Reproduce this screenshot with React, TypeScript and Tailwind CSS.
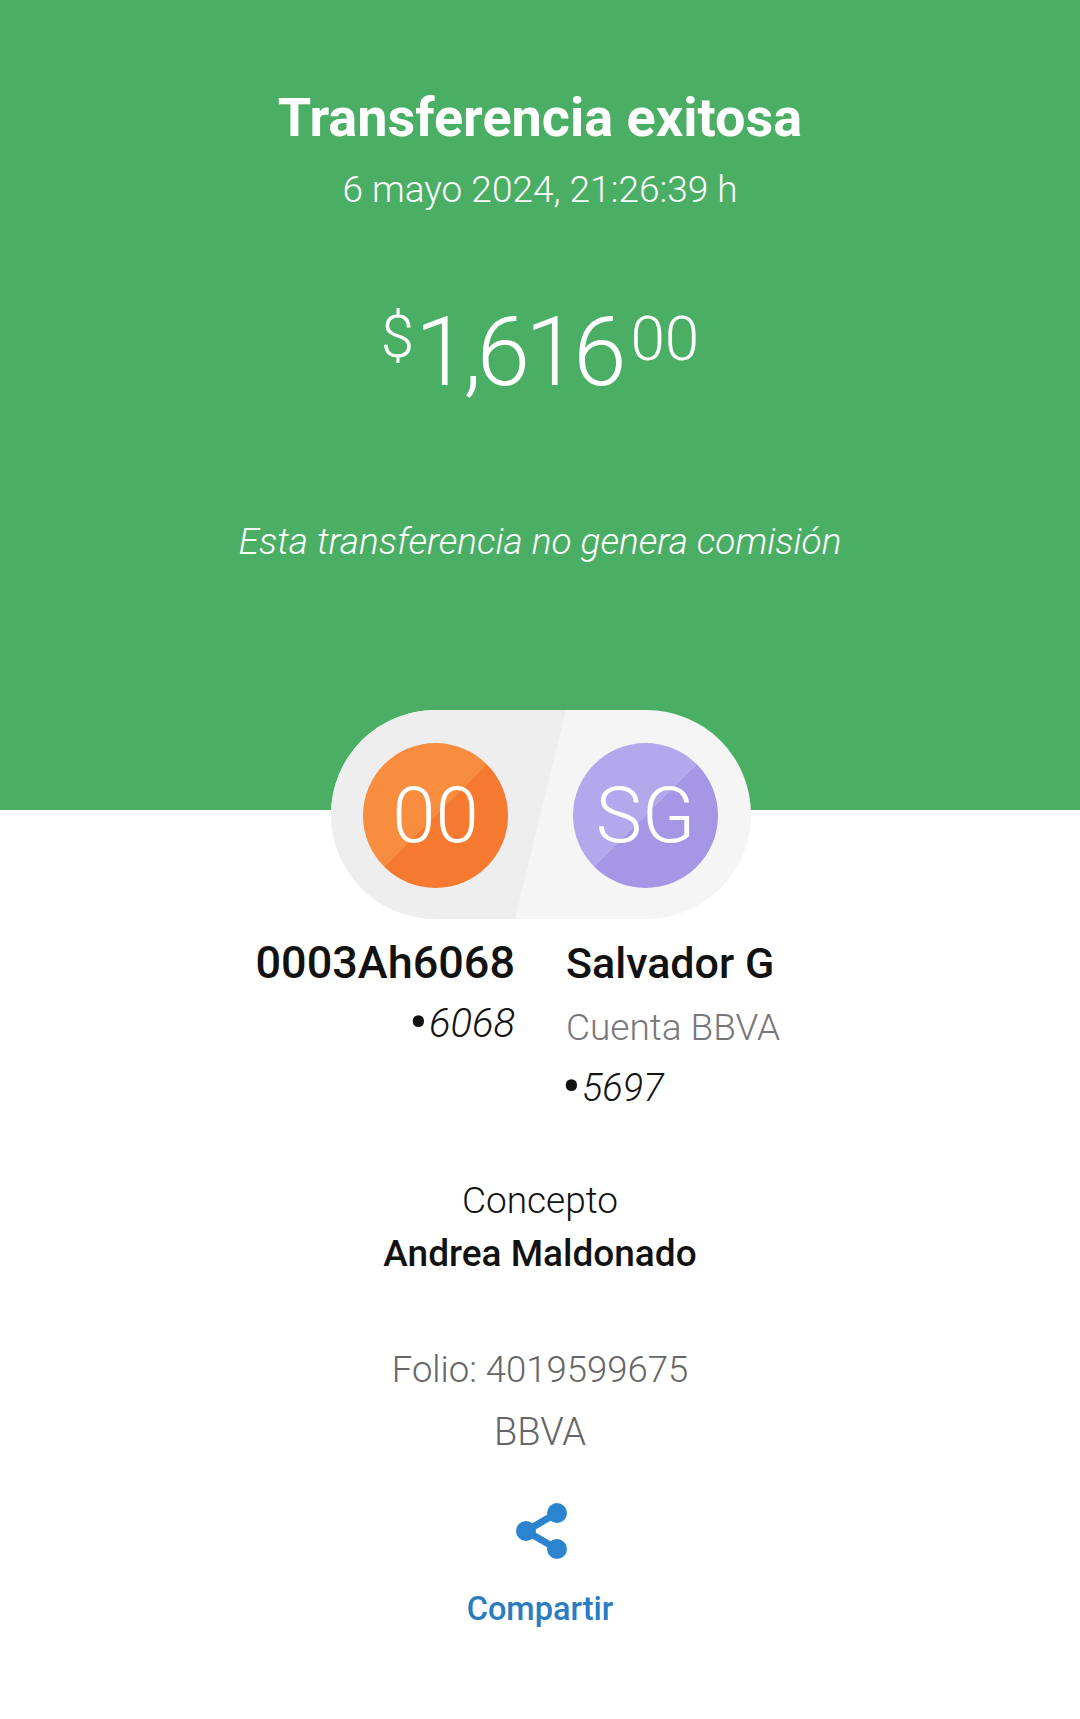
import React from 'react';

function Avatar({ text, tone }: { text: string; tone: string }) {
  return (
    <div className={`relative w-[145px] h-[145px] rounded-full flex items-center justify-center text-white text-[78px] font-light ${tone}`}>
      {text}
    </div>
  );
}

function ShareIcon() {
  return (
    <svg width="52" height="56" viewBox="0 0 52 56" className="text-[#2a84d0] ml-[4px]" fill="currentColor">
      <path d="M41 10 L10 28 L41 46" fill="none" stroke="currentColor" strokeWidth="7" />
      <circle cx="41" cy="10" r="10" />
      <circle cx="10" cy="28" r="10" />
      <circle cx="41" cy="46" r="10" />
    </svg>
  );
}

function Bullet() {
  return <span className="not-italic font-normal text-[56px] leading-[0] align-[-5px] mr-[1px]">•</span>;
}

export default function App() {
  return (
    <div className="w-[1080px] h-[1719px] bg-white font-['Roboto',sans-serif] text-center overflow-hidden">
      <header className="h-[810px] bg-[#4bae65] text-white pt-[88px]">
        <h1 className="text-[54px] leading-[60px] font-bold">Transferencia exitosa</h1>
        <p className="mt-[12px] text-[37px] leading-[60px] font-light">6 mayo 2024, 21:26:39 h</p>
        <div className="mt-[84px] h-[110px] flex justify-center items-start font-light leading-none">
          <span className="text-[60px] mt-[3px] mr-[1px]">$</span>
          <span className="text-[96px] tracking-[-5px] mr-[9px]">1,616</span>
          <span className="text-[62px] mt-[4px]">00</span>
        </div>
        <p className="mt-[103px] text-[37px] leading-[50px] font-light italic">Esta transferencia no genera comisión</p>
      </header>

      <div className="relative -mt-[100px] ml-[331px] w-[420px] h-[209px] rounded-full overflow-hidden bg-[#f5f5f5]">
        <div className="absolute inset-0 bg-[#eeeeee] [clip-path:polygon(0_0,235px_0,184px_100%,0_100%)]" />
        <div className="relative h-full pl-[32px] pt-[1px] flex items-center gap-[65px]">
          <Avatar text="00" tone="bg-[linear-gradient(135deg,#f88d3f_50%,#f5792f_50%)]" />
          <Avatar text="SG" tone="bg-[linear-gradient(135deg,#b4a8ec_50%,#a597e6_50%)]" />
        </div>
      </div>

      <section className="mt-[14px] grid grid-cols-2 gap-[52px]">
        <div className="text-right -mr-[1px]">
          <p className="text-[45px] leading-[60px] font-medium text-[#121212]">0003Ah6068</p>
          <p className="mt-[1px] text-[40px] leading-[60px] italic font-light text-[#121212]"><Bullet />6068</p>
        </div>
        <div className="text-left">
          <p className="text-[43px] leading-[60px] font-medium text-[#121212]">Salvador G</p>
          <p className="mt-[5px] text-[37px] leading-[60px] font-light text-[#777777]">Cuenta BBVA</p>
          <p className="-ml-[4px] text-[38px] leading-[60px] italic font-light text-[#121212]"><Bullet />5697</p>
        </div>
      </section>

      <section className="mt-[58px]">
        <p className="text-[37px] leading-[50px] font-light text-[#121212]">Concepto</p>
        <p className="mt-[3px] text-[37px] leading-[50px] font-medium text-[#121212]">Andrea Maldonado</p>
      </section>

      <section className="mt-[59px] text-[36.5px] leading-[63px] font-light text-[#666666]">
        <p>Folio: 4019599675</p>
        <p className="text-[38px]">BBVA</p>
      </section>

      <button className="mt-[39px] w-full flex flex-col items-center">
        <ShareIcon />
        <span className="mt-[30px] text-[32.5px] leading-[40px] font-medium text-[#2a7cc0]">Compartir</span>
      </button>
    </div>
  );
}
